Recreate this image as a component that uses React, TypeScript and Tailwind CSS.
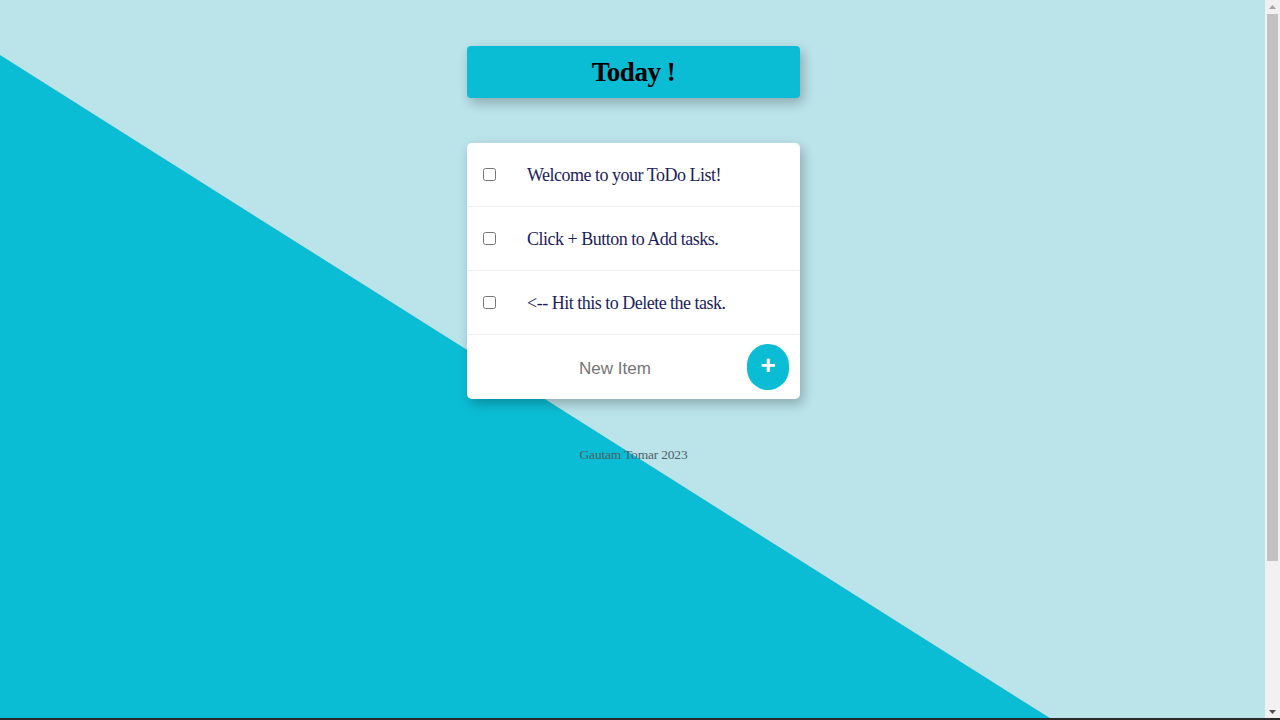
import React from "react";

const items = [
  "Welcome to your ToDo List!",
  "Click + Button to Add tasks.",
  "<-- Hit this to Delete the task.",
];

const serif = "font-['Liberation_Serif','Times_New_Roman',serif]";

const App: React.FC = () => {
  const [text, setText] = React.useState("");

  return (
    <div className="relative w-[1265px] min-h-[910px] bg-[#bae3ea] overflow-hidden">
      {/* Diagonal background */}
      <div className="absolute left-0 top-0 w-full h-[720px] bg-[#0bbdd4] [clip-path:polygon(0_55px,0_100%,1053px_100%)]" />

      <div className="relative flex flex-col items-center pt-[46px] pl-[2px]">
        {/* Heading */}
        <div className="w-[333px] h-[52px] flex items-center justify-center rounded-[4px] bg-[#0bbdd4] shadow-[3px_5px_12px_rgba(0,0,0,0.25)]">
          <h1 className={`${serif} text-[27px] tracking-[-0.5px] font-bold text-black`}>Today !</h1>
        </div>

        {/* List */}
        <div className="mt-[45px] w-[333px] rounded-[5px] bg-white shadow-[3px_5px_12px_rgba(0,0,0,0.25)]">
          {items.map((item) => (
            <div key={item} className="h-[64px] flex items-center border-b border-[#f1f1f1] pl-[16px]">
              <input type="checkbox" className="w-[13px] h-[13px]" />
              <p className={`${serif} ml-[31px] pt-[1px] text-[18px] tracking-[-0.5px] text-[#1c1e5c]`}>{item}</p>
            </div>
          ))}

          {/* New item */}
          <form className="h-[64px] flex items-center pr-[11px]" onSubmit={(e) => e.preventDefault()}>
            <input
              type="text"
              value={text}
              onChange={(e) => setText(e.target.value)}
              placeholder="New Item"
              className="flex-1 min-w-0 pl-[26px] mr-[10px] pt-[3px] text-center text-[17px] font-['Liberation_Sans',Arial,sans-serif] placeholder:text-[#757575] outline-none"
            />
            <button
              type="submit"
              className="w-[42px] h-[46px] rounded-full bg-[#0bbdd4] text-white text-[26px] font-bold leading-none flex items-center justify-center pb-[5px] font-['Liberation_Sans',Arial,sans-serif]"
            >
              +
            </button>
          </form>
        </div>

        <footer className={`${serif} mt-[46px] text-[13.5px] tracking-[-0.2px] text-[#4d5f66]`}>Gautam Tomar 2023</footer>
      </div>

      {/* Window scrollbar */}
      <div className="fixed right-0 top-0 w-[15px] h-[720px] bg-[#f1f1f1] flex flex-col items-center">
        <div className="h-[14px] flex items-center justify-center">
          <svg width="7" height="4" viewBox="0 0 7 4"><polygon points="3.5,0 7,4 0,4" fill="#a3a3a3" /></svg>
        </div>
        <div className="w-[11px] h-[547px] bg-[#c1c1c1]" />
        <div className="flex-1" />
        <div className="h-[17px] flex items-center justify-center">
          <svg width="7" height="4" viewBox="0 0 7 4"><polygon points="0,0 7,0 3.5,4" fill="#505050" /></svg>
        </div>
      </div>

      <div className="fixed left-0 bottom-0 w-full h-[2px] bg-[#2a2a2a]" />
    </div>
  );
};

export default App;
